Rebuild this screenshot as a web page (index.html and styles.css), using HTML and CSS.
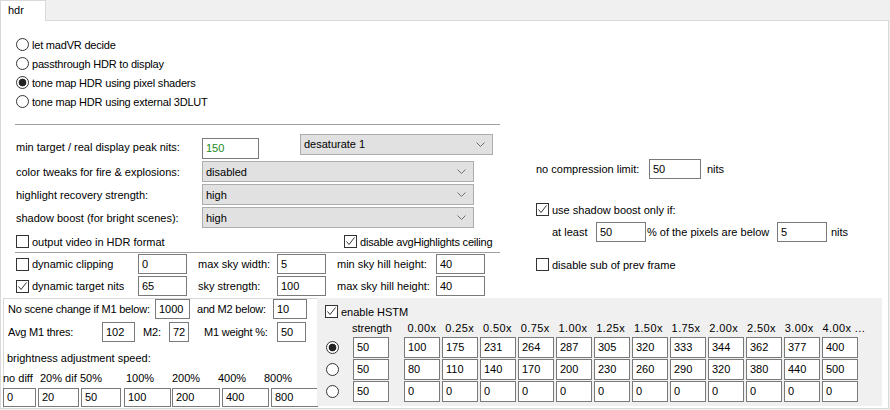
FILE: index.html
```html
<!DOCTYPE html>
<html>
<head>
<meta charset="utf-8">
<title>hdr</title>
<link rel="stylesheet" href="styles.css">
</head>
<body>
<div class="tabstrip">
  <div class="tab">hdr</div>
  <div class="tabfill"></div>
</div>
<div class="page">
  <div class="radios">
    <div class="opt"><span class="rb"></span>let madVR decide</div>
    <div class="opt"><span class="rb"></span>passthrough HDR to display</div>
    <div class="opt"><span class="rb on"></span>tone map HDR using pixel shaders</div>
    <div class="opt"><span class="rb"></span>tone map HDR using external 3DLUT</div>
  </div>
  <div class="sep sep1"></div>

  <div class="mid">
    <div class="leftcol">
      <div class="rtop">
        <span class="lbl lw186 mt3">min target / real display peak nits:</span>
        <span class="edit green e-peak">150</span>
        <span class="combo c-desat">desaturate 1<svg class="chev" width="9" height="5" viewBox="0 0 9 5"><polyline points="0.5,0.5 4.5,4.5 8.5,0.5" fill="none" stroke="#707070" stroke-width="1"/></svg></span>
      </div>
      <div class="r">
        <span class="lbl lw186">color tweaks for fire &amp; explosions:</span>
        <span class="combo c-wide">disabled<svg class="chev" width="9" height="5" viewBox="0 0 9 5"><polyline points="0.5,0.5 4.5,4.5 8.5,0.5" fill="none" stroke="#707070" stroke-width="1"/></svg></span>
      </div>
      <div class="r">
        <span class="lbl lw186">highlight recovery strength:</span>
        <span class="combo c-wide">high<svg class="chev" width="9" height="5" viewBox="0 0 9 5"><polyline points="0.5,0.5 4.5,4.5 8.5,0.5" fill="none" stroke="#707070" stroke-width="1"/></svg></span>
      </div>
      <div class="r">
        <span class="lbl lw186">shadow boost (for bright scenes):</span>
        <span class="combo c-wide">high<svg class="chev" width="9" height="5" viewBox="0 0 9 5"><polyline points="0.5,0.5 4.5,4.5 8.5,0.5" fill="none" stroke="#707070" stroke-width="1"/></svg></span>
      </div>
      <div class="rchk">
        <span class="chk w328"><span class="cb"></span>output video in HDR format</span>
        <span class="chk tight"><span class="cb"><svg width="11" height="11" viewBox="0 0 11 11"><polyline points="1.5,5.5 4,8.5 9.5,1.5" fill="none" stroke="#333" stroke-width="1"/></svg></span>disable avgHighlights ceiling</span>
      </div>
      <div class="sep sep2"></div>
      <div class="rdyn">
        <span class="chk w122"><span class="cb"></span>dynamic clipping</span>
        <span class="edit w49">0</span>
        <span class="lbl ml11 w79">max sky width:</span>
        <span class="edit w49">5</span>
        <span class="lbl ml11 w99">min sky hill height:</span>
        <span class="edit w49">40</span>
      </div>
      <div class="rdyn">
        <span class="chk w122"><span class="cb"><svg width="11" height="11" viewBox="0 0 11 11"><polyline points="1.5,5.5 4,8.5 9.5,1.5" fill="none" stroke="#333" stroke-width="1"/></svg></span>dynamic target nits</span>
        <span class="edit w49">65</span>
        <span class="lbl ml11 w79">sky strength:</span>
        <span class="edit w49">100</span>
        <span class="lbl ml11 w99">max sky hill height:</span>
        <span class="edit w49">40</span>
      </div>
    </div>

    <div class="rightcol">
      <div class="rr r-nocomp">
        <span class="lbl w113">no compression limit:</span>
        <span class="edit w52">50</span>
        <span class="lbl ml6">nits</span>
      </div>
      <div class="rr r-boost">
        <span class="chk"><span class="cb"><svg width="11" height="11" viewBox="0 0 11 11"><polyline points="1.5,5.5 4,8.5 9.5,1.5" fill="none" stroke="#333" stroke-width="1"/></svg></span>use shadow boost only if:</span>
      </div>
      <div class="rr r-least">
        <span class="lbl w44">at least</span>
        <span class="edit w50">50</span>
        <span class="lbl ml1 w130">% of the pixels are below</span>
        <span class="edit w50">5</span>
        <span class="lbl ml4">nits</span>
      </div>
      <div class="rr r-sub">
        <span class="chk"><span class="cb"></span>disable sub of prev frame</span>
      </div>
    </div>
  </div>

  <div class="bottom">
    <div class="scene">
      <div class="srow">
        <span class="lbl w147">No scene change if M1 below:</span>
        <span class="edit w35">1000</span>
        <span class="lbl ml7 w76">and M2 below:</span>
        <span class="edit w34">10</span>
      </div>
      <div class="srow mt3">
        <span class="lbl w94">Avg M1 thres:</span>
        <span class="edit w33">102</span>
        <span class="lbl ml8 w26">M2:</span>
        <span class="edit w20">72</span>
        <span class="lbl ml15 w73">M1 weight %:</span>
        <span class="edit w29">50</span>
      </div>
      <div class="speedlbl">brightness adjustment speed:</div>
      <div class="speedhead">
        <span class="sh37">no diff</span>
        <span class="sh40">20% dif</span>
        <span class="sh46">50%</span>
        <span class="sh46">100%</span>
        <span class="sh46">200%</span>
        <span class="sh46">400%</span>
        <span>800%</span>
      </div>
      <div class="speedrow">
        <span class="edit w33">0</span>
        <span class="edit ml2 w41">20</span>
        <span class="edit ml2 w40">50</span>
        <span class="edit ml3 w47">100</span>
        <span class="edit ml1 w48">200</span>
        <span class="edit ml2 w47">400</span>
        <span class="edit ml2 w47">800</span>
      </div>
    </div>

    <div class="hstm">
      <div class="hchk">
        <span class="chk"><span class="cb"><svg width="11" height="11" viewBox="0 0 11 11"><polyline points="1.5,5.5 4,8.5 9.5,1.5" fill="none" stroke="#333" stroke-width="1"/></svg></span>enable HSTM</span>
      </div>
      <div class="hhead">
        <span class="hh-str">strength</span>
        <span class="hh">0.00x</span><span class="hh">0.25x</span><span class="hh">0.50x</span><span class="hh">0.75x</span>
        <span class="hh">1.00x</span><span class="hh">1.25x</span><span class="hh">1.50x</span><span class="hh">1.75x</span>
        <span class="hh">2.00x</span><span class="hh">2.50x</span><span class="hh">3.00x</span><span class="hh hh-last">4.00x ...</span>
      </div>
      <div class="hrow">
        <span class="rb on"></span>
        <span class="edit hs">50</span>
        <span class="vals">
          <span class="edit hv">100</span><span class="edit hv">175</span><span class="edit hv">231</span><span class="edit hv">264</span>
          <span class="edit hv">287</span><span class="edit hv">305</span><span class="edit hv">320</span><span class="edit hv">333</span>
          <span class="edit hv">344</span><span class="edit hv">362</span><span class="edit hv">377</span><span class="edit hv">400</span>
        </span>
      </div>
      <div class="hrow">
        <span class="rb"></span>
        <span class="edit hs">50</span>
        <span class="vals">
          <span class="edit hv">80</span><span class="edit hv">110</span><span class="edit hv">140</span><span class="edit hv">170</span>
          <span class="edit hv">200</span><span class="edit hv">230</span><span class="edit hv">260</span><span class="edit hv">290</span>
          <span class="edit hv">320</span><span class="edit hv">380</span><span class="edit hv">440</span><span class="edit hv">500</span>
        </span>
      </div>
      <div class="hrow">
        <span class="rb"></span>
        <span class="edit hs">50</span>
        <span class="vals">
          <span class="edit hv">0</span><span class="edit hv">0</span><span class="edit hv">0</span><span class="edit hv">0</span>
          <span class="edit hv">0</span><span class="edit hv">0</span><span class="edit hv">0</span><span class="edit hv">0</span>
          <span class="edit hv">0</span><span class="edit hv">0</span><span class="edit hv">0</span><span class="edit hv">0</span>
        </span>
      </div>
    </div>
  </div>
</div>
</body>
</html>
```

FILE: styles.css
```css
* { box-sizing: border-box; }
html, body { margin: 0; padding: 0; }
body {
  width: 890px;
  height: 410px;
  overflow: hidden;
  background: #f0f0f0;
  font-family: "Liberation Sans", Arial, sans-serif;
  font-size: 11px;
  color: #000;
}

/* tab strip */
.tabstrip { display: flex; height: 21px; }
.tab {
  width: 46px;
  height: 21px;
  background: #fff;
  border: 1px solid #d9d9d9;
  border-bottom: none;
  padding-left: 7px;
  line-height: 19px;
  font-size: 11px;
}
.tabfill { width: 843px; height: 21px; border-bottom: 1px solid #d9d9d9; }

.page {
  width: 889px;
  height: 388px;
  background: #fff;
  border: 1px solid #d9d9d9;
  border-top: none;
  padding: 14px 0 0 15px;
}

/* radios */
.radios { display: flex; flex-direction: column; }
.opt { display: flex; align-items: center; height: 19px; white-space: nowrap; letter-spacing: -0.2px; }
.rb {
  flex: none;
  width: 13px;
  height: 13px;
  border: 1px solid #333;
  border-radius: 50%;
  background: #fff;
  margin-right: 3px;
}
.rb.on { background: radial-gradient(circle, #222 0, #222 3.5px, #fff 4.2px); }

.sep { height: 1px; background: #a0a0a0; width: 485px; margin-left: -1px; }
.sep1 { margin-top: 13px; margin-bottom: 9px; }
.sep2 { margin-top: 1px; }

/* generic */
.lbl { flex: none; white-space: nowrap; }
.tight { letter-spacing: -0.2px; }
.mt3 { margin-top: 3px; }
.ml1 { margin-left: 1px; }
.ml2 { margin-left: 2px; }
.ml3 { margin-left: 3px; }
.ml4 { margin-left: 4px; }
.ml6 { margin-left: 6px; }
.ml7 { margin-left: 7px; }
.ml8 { margin-left: 8px; }
.ml11 { margin-left: 11px; }
.ml15 { margin-left: 15px; }
.lw186 { width: 186px; }
.w20 { width: 20px; } .w26 { width: 26px; } .w29 { width: 29px; }
.w33 { width: 33px; } .w34 { width: 34px; } .w35 { width: 35px; }
.w40 { width: 40px; } .w41 { width: 41px; } .w44 { width: 44px; }
.w47 { width: 47px; } .w48 { width: 48px; } .w49 { width: 49px; }
.w50 { width: 50px; } .w52 { width: 52px; } .w73 { width: 73px; }
.w76 { width: 76px; } .w79 { width: 79px; } .w94 { width: 94px; }
.w99 { width: 99px; } .w113 { width: 113px; } .w122 { width: 122px; }
.w130 { width: 130px; } .w147 { width: 147px; } .w328 { width: 328px; }

.edit {
  flex: none;
  display: block;
  height: 20px;
  border: 1px solid #7a7a7a;
  background: #fff;
  padding-left: 3px;
  line-height: 18px;
  white-space: nowrap;
  overflow: hidden;
}
.green { color: #1a8a1a; }

.combo {
  flex: none;
  display: flex;
  align-items: center;
  justify-content: space-between;
  height: 21px;
  border: 1px solid #adadad;
  background: #e1e1e1;
  padding: 0 7px 0 3px;
  white-space: nowrap;
}
.chev { display: block; }

.chk { flex: none; display: flex; align-items: center; white-space: nowrap; }
.cb {
  flex: none;
  display: flex;
  width: 13px;
  height: 13px;
  border: 1px solid #333;
  background: #fff;
  margin-right: 3px;
}
.cb svg { display: block; }

/* middle */
.mid { display: flex; }
.leftcol { width: 484px; flex: none; }
.rtop { display: flex; align-items: flex-start; height: 25px; }
.rtop .lbl { line-height: 21px; }
.e-peak { width: 57px; height: 21px; margin-top: 4px; line-height: 19px; }
.c-desat { width: 193px; margin-left: 41px; padding-bottom: 1px; }
.r { display: flex; align-items: center; height: 21px; margin-top: 2px; }
.c-wide { width: 272px; }
.rchk { display: flex; align-items: center; height: 19px; margin-top: 4px; }
.rdyn { display: flex; align-items: center; height: 22px; }

.rightcol { margin-left: 36px; flex: 1; }
.rr { display: flex; align-items: center; }
.r-nocomp { margin-top: 25px; height: 20px; }
.r-boost { margin-top: 21px; height: 19px; }
.r-least { margin-top: 3px; height: 20px; padding-left: 16px; }
.r-sub { margin-top: 13px; height: 19px; }

/* bottom */
.bottom { display: flex; margin-left: -13px; margin-top: 1px; height: 110px; }
.scene {
  width: 314px;
  flex: none;
  border-left: 1px solid #d9d9d9;
  border-top: 1px solid #d9d9d9;
}
.srow { display: flex; align-items: center; height: 20px; padding-left: 4px; }
.srow .lbl { letter-spacing: -0.2px; }
.speedlbl { margin-top: 9px; height: 14px; line-height: 14px; padding-left: 3px; }
.speedhead { display: flex; margin-top: 6px; height: 14px; line-height: 14px; margin-left: -1px; white-space: nowrap; }
.sh37 { width: 37px; } .sh40 { width: 40px; } .sh46 { width: 46px; }
.speedrow { display: flex; margin-top: 3px; margin-left: -1px; }
.speedrow .edit { height: 19px; line-height: 17px; }

.hstm {
  width: 565px;
  height: 108px;
  flex: none;
  background: #f0f0f0;
  padding: 4px 0 0 8px;
}
.hchk { display: flex; align-items: center; height: 19px; }
.hhead { display: flex; height: 14px; line-height: 14px; white-space: nowrap; }
.hh-str { width: 56px; margin-left: 27px; }
.hh { width: 38px; letter-spacing: 0.4px; }
.hh-last { width: 60px; }
.hrow { display: flex; align-items: center; height: 21px; margin-top: 1px; }
.hhead + .hrow { margin-top: 2px; }
.hrow .rb { margin-left: 1px; margin-right: 0; }
.hs { width: 36px; height: 21px; margin-left: 14px; line-height: 19px; }
.vals { display: flex; margin-left: 15px; }
.hv { width: 36px; height: 21px; margin-right: 2px; line-height: 19px; }
```
